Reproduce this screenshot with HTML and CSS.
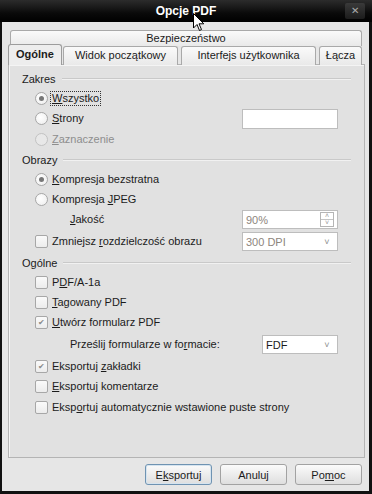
FILE: index.html
```html
<!DOCTYPE html>
<html lang="pl">
<head>
    <meta charset="UTF-8">
    <title>Opcje PDF</title>
    <link rel="stylesheet" href="styles.css">
</head>
<body>
    <div class="window">
        <div class="titlebar">
            <span class="title">Opcje PDF</span>
            <span class="close-btn">&#x2715;</span>
            <svg class="cursor" width="12" height="20" viewBox="0 0 12 20">
                <path d="M0.5 0.5 L0.5 15 L4 11.5 L6.5 17.5 L8.5 16.5 L6 10.8 L10.8 10.8 Z" fill="#fff" stroke="#000" stroke-width="1"/>
            </svg>
        </div>
        <div class="client">
            <div class="tab-row">
                <div class="tab tab-wide">Bezpieczeństwo</div>
            </div>
            <div class="tab-row tab-row-front">
                <div class="tab tab-active">Ogólne</div>
                <div class="tab tab-widok">Widok początkowy</div>
                <div class="tab tab-interfejs">Interfejs użytkownika</div>
                <div class="tab tab-lacza">Łącza</div>
            </div>
            <div class="panel">
                <div class="group-head first"><span>Zakres</span><i></i></div>
                <div class="row r20">
                    <span class="radio on"></span><span class="label focus"><u>W</u>szystko</span>
                </div>
                <div class="row">
                    <span class="radio"></span><span class="label"><u>S</u>trony</span>
                    <span class="field field-pages"></span>
                </div>
                <div class="row">
                    <span class="radio off"></span><span class="label disabled"><u>Z</u>aznaczenie</span>
                </div>

                <div class="group-head"><span>Obrazy</span><i></i></div>
                <div class="row r20">
                    <span class="radio on"></span><span class="label"><u>K</u>ompresja bezstratna</span>
                </div>
                <div class="row r20">
                    <span class="radio"></span><span class="label">Kompresja <u>J</u>PEG</span>
                </div>
                <div class="row">
                    <span class="label indent"><u>J</u>akość</span>
                    <span class="field field-spin"><span class="val dim">90%</span><span class="spin"><b>&#x2c4;</b><b>&#x2c5;</b></span></span>
                </div>
                <div class="row r23">
                    <span class="check"></span><span class="label">Zmniejsz <u>r</u>ozdzielczość obrazu</span>
                    <span class="field field-combo"><span class="val dim">300 DPI</span><span class="arrow">&#x2c5;</span></span>
                </div>

                <div class="group-head"><span>Ogólne</span><i></i></div>
                <div class="row r20">
                    <span class="check"></span><span class="label">P<u>D</u>F/A-1a</span>
                </div>
                <div class="row r20">
                    <span class="check"></span><span class="label"><u>T</u>agowany PDF</span>
                </div>
                <div class="row">
                    <span class="check on">&#x2714;</span><span class="label"><u>U</u>twórz formularz PDF</span>
                </div>
                <div class="row r23">
                    <span class="label indent">Prześlij formularze w fo<u>r</u>macie:</span>
                    <span class="field field-format"><span class="val">FDF</span><span class="arrow">&#x2c5;</span></span>
                </div>
                <div class="row r20">
                    <span class="check on">&#x2714;</span><span class="label">Eksportuj <u>z</u>akładki</span>
                </div>
                <div class="row">
                    <span class="check"></span><span class="label"><u>E</u>ksportuj komentarze</span>
                </div>
                <div class="row">
                    <span class="check"></span><span class="label">Eksp<u>o</u>rtuj automatycznie wstawione puste strony</span>
                </div>
            </div>
            <div class="buttons">
                <button class="btn default">E<u>k</u>sportuj</button>
                <button class="btn">Anuluj</button>
                <button class="btn">Po<u>m</u>oc</button>
            </div>
        </div>
    </div>
</body>
</html>
```

FILE: styles.css
```css
body {
    margin: 0;
    background: #000;
    font-family: "Liberation Sans", Arial, sans-serif;
    font-size: 11px;
    color: #1b1b1b;
}

.window {
    width: 372px;
    height: 494px;
    background: #111;
    display: flex;
    flex-direction: column;
}

.titlebar {
    position: relative;
    height: 22px;
    background: linear-gradient(#2c2c2c, #0a0a0a 60%, #000);
    display: flex;
    align-items: center;
    justify-content: center;
}
.title {
    color: #fff;
    font-weight: bold;
    font-size: 12px;
}
.close-btn {
    position: absolute;
    right: 7px;
    top: 3px;
    width: 20px;
    height: 16px;
    line-height: 16px;
    text-align: center;
    font-size: 10px;
    color: #aaa;
    background: linear-gradient(#3a3a3a, #1c1c1c);
    border-radius: 2px;
}
.cursor {
    position: absolute;
    left: 193px;
    top: 13px;
    z-index: 5;
}

.client {
    flex: 1;
    margin: 0 3px 3px 2px;
    background: #e6e6e6;
    padding: 8px 0 0 6px;
    display: flex;
    flex-direction: column;
}

.tab-row {
    display: flex;
    gap: 3px;
    height: 15px;
}
.tab-row-front {
    height: 19px;
    position: relative;
    z-index: 1;
}
.tab {
    box-sizing: border-box;
    border: 1px solid #a9a9a9;
    border-bottom: none;
    border-radius: 3px 3px 0 0;
    background: linear-gradient(#fafafa, #e9e9e9);
    text-align: center;
    line-height: 16px;
    height: 19px;
    margin-top: 1px;
    color: #1b1b1b;
}
.tab-wide {
    margin-left: 2px;
    width: 352px;
    height: 16px;
    line-height: 15px;
    margin-top: 0;
}
.tab-active {
    width: 54px;
    height: 21px;
    margin-top: -1px;
    margin-right: -2px;
    font-weight: bold;
    background: #ededed;
    border-color: #9c9c9c;
    line-height: 19px;
}
.tab-widok { width: 115px; }
.tab-interfejs { width: 135px; }
.tab-lacza { width: 43px; }

.panel {
    box-sizing: border-box;
    width: 357px;
    height: 394px;
    border: 1px solid #b4b4b4;
    box-shadow: inset 1px 1px #f4f4f4;
    background: #e1e1e1;
    padding: 5px 0 0 13px;
}

.group-head {
    height: 19px;
    display: flex;
    align-items: center;
    gap: 6px;
    padding-right: 13px;
}
.group-head.first { height: 18px; }
.group-head i {
    flex: 1;
    height: 1px;
    background: #c9c9c9;
    border-bottom: 1px solid #f1f1f1;
}

.row {
    height: 21px;
    display: flex;
    align-items: center;
    padding-left: 13px;
    position: relative;
}
.row.r20 { height: 20px; }
.row.r23 { height: 23px; }

.label {
    margin-left: 3px;
    padding: 0 1px;
    line-height: 13px;
}
.label.indent { margin-left: 34px; }
.label.disabled { color: #8e8e8e; }
.label.focus { outline: 1px dotted #333; }

.radio {
    width: 11px;
    height: 11px;
    border: 1px solid #a7a7a7;
    border-radius: 50%;
    background: radial-gradient(circle at 40% 40%, #fff, #ececec);
    position: relative;
}
.radio.on::after {
    content: "";
    position: absolute;
    left: 3px;
    top: 3px;
    width: 5px;
    height: 5px;
    border-radius: 50%;
    background: #777;
}
.radio.off { border-color: #c2c2c2; background: #e8e8e8; }

.check {
    box-sizing: border-box;
    width: 13px;
    height: 13px;
    border: 1px solid #a7a7a7;
    border-radius: 2px;
    background: linear-gradient(#fafafa, #ececec);
    font-size: 8px;
    line-height: 11px;
    text-align: center;
    color: #8a8a8a;
}

.field {
    position: absolute;
    box-sizing: border-box;
    height: 19px;
    border: 1px solid #bdbdbd;
    background: #fff;
    display: flex;
    align-items: center;
}
.field-pages { left: 220px; width: 96px; height: 20px; }
.field-spin { left: 220px; width: 96px; }
.field-combo { left: 220px; width: 96px; }
.field-format { left: 240px; width: 76px; }
.val {
    padding-left: 3px;
    flex: 1;
    font-size: 11px;
}
.val.dim { color: #8d857d; }
.spin {
    width: 12px;
    height: 13px;
    margin-right: 3px;
    border: 1px solid #b5b5b5;
    display: flex;
    flex-direction: column;
    font-size: 7px;
    line-height: 6px;
    color: #9a9a9a;
    text-align: center;
}
.spin b { font-weight: normal; height: 6px; }
.spin b:first-child { border-bottom: 1px solid #c4c4c4; }
.arrow {
    width: 20px;
    font-size: 9px;
    color: #888;
    text-align: center;
}

.buttons {
    display: flex;
    justify-content: flex-end;
    gap: 8px;
    padding: 6px 7px 0 0;
}
.btn {
    box-sizing: border-box;
    width: 67px;
    height: 21px;
    font-family: "Liberation Sans", Arial, sans-serif;
    font-size: 11px;
    color: #1b1b1b;
    border: 1px solid #a2a2a2;
    border-radius: 3px;
    background: linear-gradient(#fbfbfb, #dedede);
    padding: 0;
}
.btn.default {
    border-color: #6f93b2;
    box-shadow: inset 0 0 0 1px #d6e4ef;
}
```
